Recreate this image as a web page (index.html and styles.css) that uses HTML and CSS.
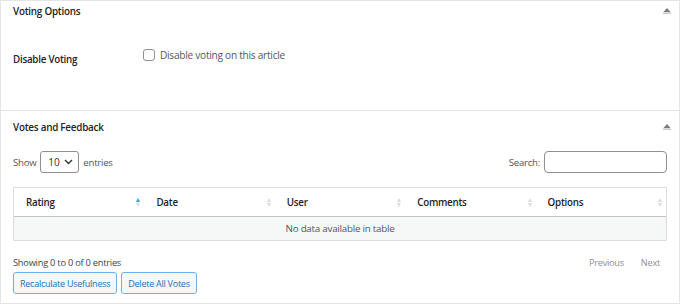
FILE: index.html
```html
<!DOCTYPE html>
<html>
<head>
<meta charset="utf-8">
<link rel="stylesheet" href="styles.css">
</head>
<body>
<div class="postbox box1">
  <div class="ph ph1">
    <span class="ph-title">Voting Options</span>
    <svg class="toggle" width="8" height="6" viewBox="0 0 8 6"><path d="M4 0 L7.5 4 L0.5 4 Z" fill="#787c82"/><rect x="0" y="4.6" width="8" height="1" fill="#a7aaad"/></svg>
  </div>
  <div class="row">
    <div class="th">Disable Voting</div>
    <label class="td"><span class="cb"></span><span class="cb-label">Disable voting on this article</span></label>
  </div>
</div>
<div class="postbox box2">
  <div class="ph ph2">
    <span class="ph-title">Votes and Feedback</span>
    <svg class="toggle" width="8" height="6" viewBox="0 0 8 6"><path d="M4 0 L7.5 4 L0.5 4 Z" fill="#787c82"/><rect x="0" y="4.6" width="8" height="1" fill="#a7aaad"/></svg>
  </div>
  <div class="inside">
    <div class="controls">
      <div class="len">Show <span class="sel">10 <svg width="9" height="6" viewBox="0 0 9 6"><path d="M1 1 L4.5 4.5 L8 1" fill="none" stroke="#2c3338" stroke-width="1.4"/></svg></span> entries</div>
      <div class="search">Search: <span class="inp"></span></div>
    </div>
    <div class="table">
      <div class="thead">
        <div class="col">Rating<span class="sort"><i class="up active"></i><i class="dn"></i></span></div>
        <div class="col">Date<span class="sort"><i class="up"></i><i class="dn"></i></span></div>
        <div class="col">User<span class="sort"><i class="up"></i><i class="dn"></i></span></div>
        <div class="col">Comments<span class="sort"><i class="up"></i><i class="dn"></i></span></div>
        <div class="col">Options<span class="sort"><i class="up"></i><i class="dn"></i></span></div>
      </div>
      <div class="tbody">No data available in table</div>
    </div>
    <div class="footer">
      <span class="info">Showing 0 to 0 of 0 entries</span>
      <span class="pager"><span>Previous</span><span>Next</span></span>
    </div>
    <div class="buttons">
      <span class="btn">Recalculate Usefulness</span>
      <span class="btn">Delete All Votes</span>
    </div>
  </div>
</div>
</body>
</html>
```

FILE: styles.css
```css
html, body { margin: 0; padding: 0; background: #fff; }
body {
  font-family: "Open Sans", "Noto Sans", sans-serif;
  font-size: 9.6px;
  letter-spacing: -0.25px;
  color: #3c434a;
  width: 680px;
  height: 304px;
  overflow: hidden;
}
.postbox {
  border: 1px solid #e2e4e7;
  box-sizing: border-box;
  width: 680px;
}
.box1 { height: 111px; }
.box2 { height: 193px; border-top: none; }
.ph {
  display: flex;
  align-items: center;
  justify-content: space-between;
  padding: 0 8px 0 12px;
}
.ph1 { height: 20px; padding-bottom: 2px; }
.ph2 { height: 31px; }
.ph-title { font-weight: 600; font-size: 9.9px; color: #1d2327; }
.toggle { display: block; }
.row { display: flex; }
.th {
  width: 130px;
  padding: 30px 0 0 12px;
  font-weight: 600;
  font-size: 9.8px;
  line-height: 14px;
  color: #1d2327;
}
.td {
  display: flex;
  align-items: center;
  gap: 5px;
  padding-top: 25px;
  height: 14px;
}
.cb {
  width: 10px; height: 10px;
  border: 1px solid #8c8f94;
  border-radius: 3px;
  background: #fff;
}
.cb-label { color: #50575e; font-size: 10.1px; }
.inside { padding: 0 12px; }
.controls {
  display: flex;
  justify-content: space-between;
  align-items: center;
  height: 22px;
  margin-top: 9px;
}
.len, .search { display: flex; align-items: center; gap: 4px; color: #50575e; }
.sel {
  display: flex;
  align-items: center;
  justify-content: space-between;
  box-sizing: border-box;
  width: 39px; height: 22px;
  border: 1px solid #8c8f94;
  border-radius: 3px;
  padding: 0 5px 0 7px;
  font-size: 10.1px;
  color: #2c3338;
}
.inp {
  display: block;
  box-sizing: border-box;
  width: 123px; height: 22px;
  border: 1px solid #8c8f94;
  border-radius: 4px;
}
.table {
  margin-top: 14px;
  border: 1px solid #dcdcde;
}
.thead {
  display: grid;
  grid-template-columns: repeat(5, 1fr);
  height: 28px;
  border-bottom: 1px solid #c3c4c7;
}
.col {
  display: flex;
  align-items: center;
  justify-content: space-between;
  padding: 1px 4px 0 12px;
  font-weight: 600;
  font-size: 9.8px;
  color: #1d2327;
}
.sort { display: flex; flex-direction: column; gap: 1px; }
.sort i {
  display: block;
  width: 0; height: 0;
  border-left: 2.5px solid transparent;
  border-right: 2.5px solid transparent;
}
.sort .up { border-bottom: 4px solid #dcdcde; }
.sort .dn { border-top: 4px solid #dcdcde; }
.sort .up.active { border-bottom-color: #2ea2cc; }
.tbody {
  height: 23px;
  line-height: 24px;
  text-align: center;
  background: #f6f7f7;
  color: #50575e;
  font-size: 9.8px;
}
.footer {
  display: flex;
  justify-content: space-between;
  align-items: center;
  height: 20px;
  margin-top: 11px;
}
.info { font-size: 9.3px; }
.pager { display: flex; gap: 17px; padding-right: 7px; color: #8c8f94; font-size: 9.2px; }
.buttons { display: flex; gap: 4px; margin-top: 0; }
.btn {
  display: flex;
  align-items: center;
  box-sizing: border-box;
  height: 22px;
  padding: 0 6px;
  border: 1px solid #72aee6;
  border-radius: 3px;
  background: #f6f7f7;
  color: #2271b1;
  font-size: 9px;
}
```
